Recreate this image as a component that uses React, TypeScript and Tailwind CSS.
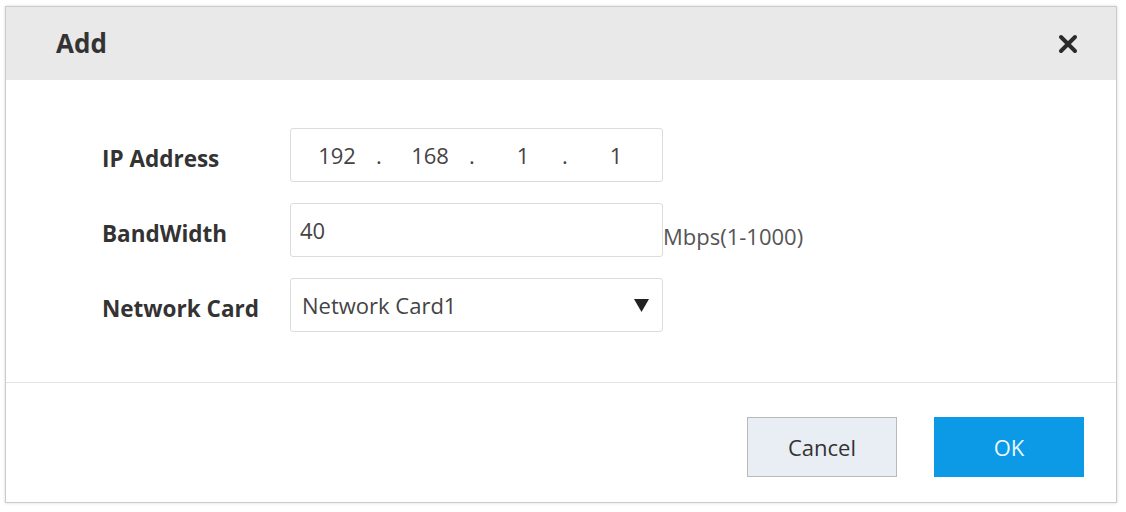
const font = { fontFamily: '"Open Sans", "Liberation Sans", sans-serif' };

const IpCell = ({ value, dot }: { value: string; dot: boolean }) => (
  <div className="flex items-center w-[93px]">
    <span className="ml-[9px] w-[74px] text-center">{value}</span>
    {dot && <span className="w-[10px] text-center">.</span>}
  </div>
);

const Row = ({ label, children }: { label: string; children: React.ReactNode }) => (
  <div className="flex items-center h-[54px]">
    <div className="w-[188px] pt-[8px] text-[22.5px] font-bold text-[#333]">{label}</div>
    {children}
  </div>
);

export default function App() {
  return (
    <div className="w-[1126px] h-[512px] bg-white pt-[6px] pl-[5px]" style={font}>
      <div className="w-[1112px] h-[497px] border border-[#cbcbcb] shadow-[0_0_3px_rgba(0,0,0,0.15)] bg-white flex flex-col">
        {/* header */}
        <div className="h-[73px] bg-[#e9e9e9] flex items-center justify-between pl-[50px] pr-[38px]">
          <span className="text-[26px] font-bold text-[#333]">Add</span>
          <svg width="20" height="20" viewBox="0 0 20 20">
            <path d="M3 3 L17 17 M17 3 L3 17" stroke="#2b2b2b" strokeWidth="4" strokeLinecap="round" />
          </svg>
        </div>

        {/* body */}
        <div className="h-[302px] pt-[48px] pl-[96px] flex flex-col gap-[21px] text-[22px]">
          <Row label="IP Address">
            <div className="w-[373px] h-[54px] border border-[#dcdcdc] rounded-[3px] flex items-center text-[#444]">
              <IpCell value="192" dot />
              <IpCell value="168" dot />
              <IpCell value="1" dot />
              <IpCell value="1" dot={false} />
            </div>
          </Row>
          <Row label="BandWidth">
            <div className="w-[373px] h-[54px] border border-[#dcdcdc] rounded-[3px] flex items-center pl-[9px] text-[#444]">
              40
            </div>
            <span className="mt-[12px] text-[#555]">Mbps(1-1000)</span>
          </Row>
          <Row label="Network Card">
            <div className="w-[373px] h-[54px] border border-[#dcdcdc] rounded-[3px] flex items-center justify-between pl-[11px] pr-[13px] text-[#444]">
              <span>Network Card1</span>
              <svg width="15" height="13" viewBox="0 0 15 13">
                <polygon points="0,0 15,0 7.5,13" fill="#222" />
              </svg>
            </div>
          </Row>
        </div>

        {/* footer */}
        <div className="flex-1 border-t border-[#e2e2e2] flex justify-end items-start gap-[37px] pt-[34px] pr-[32px] text-[22px]">
          <button className="w-[150px] h-[60px] bg-[#e9eef4] border border-[#b9b9b9] text-[#333]">
            Cancel
          </button>
          <button className="w-[150px] h-[60px] bg-[#0c9ae6] text-[#eaf7ff]">
            OK
          </button>
        </div>
      </div>
    </div>
  );
}
